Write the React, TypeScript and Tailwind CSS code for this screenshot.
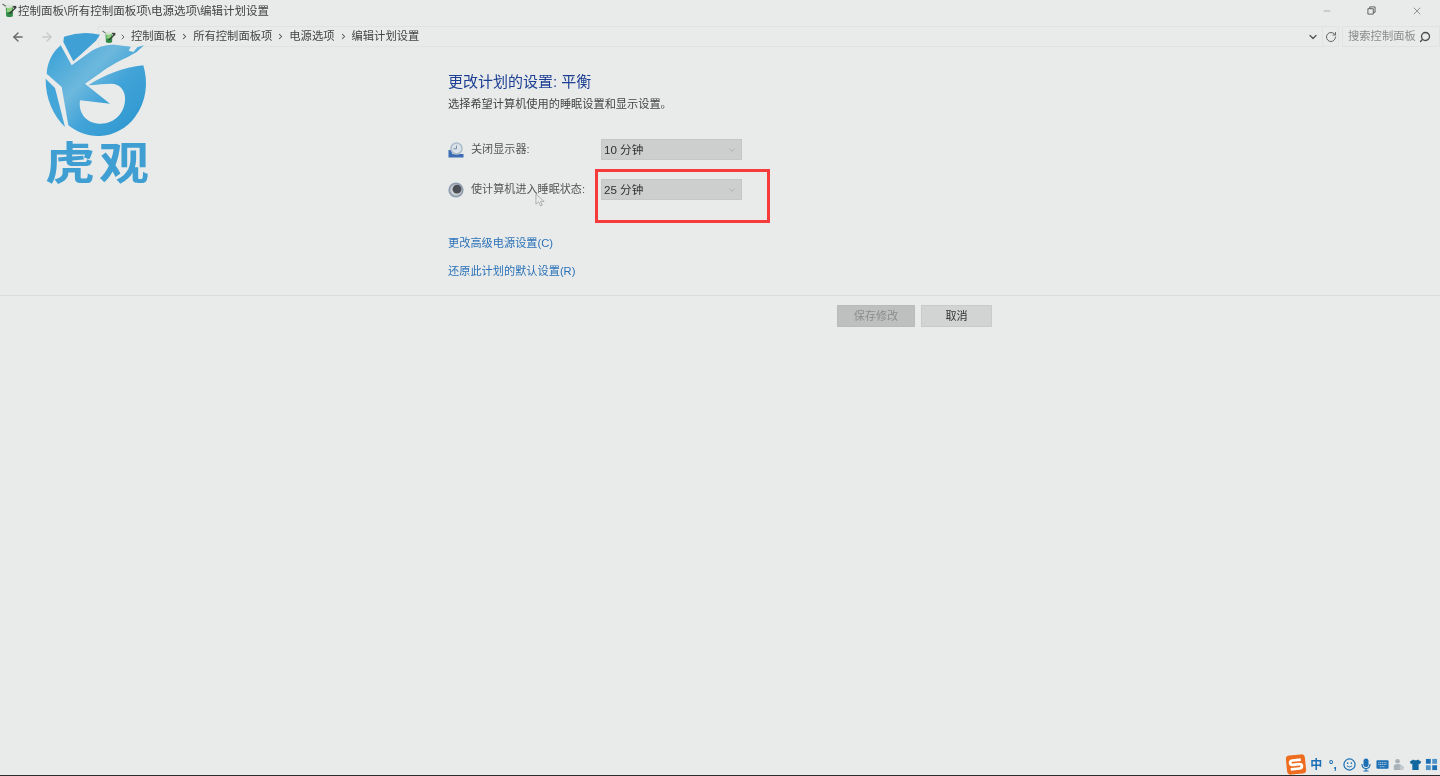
import React from 'react';
import { ArrowLeft, ArrowRight, ChevronDown, ChevronRight, RotateCw, Search, X, Minus } from 'lucide-react';

const FONT = "font-['Liberation_Sans','Noto_Sans_CJK_SC',sans-serif]";

const BatteryIcon: React.FC<{ className?: string }> = ({ className }) => (
  <svg viewBox="0 0 16 16" className={className}>
    <path d="M4 3 L12 2.5 L11.5 14 Q8 15.8 4.5 14 Z" fill="#2e8a45" />
    <path d="M5 5 L11 4.5 L10.8 9 L5 10 Z" fill="#8ed07c" />
    <path d="M3.8 3 Q8 0.6 12.2 2.6 L11.8 4.6 Q8 6 4.2 5 Z" fill="#d9e4d6" />
    <path d="M0.5 1 L4 3.5" stroke="#6d7268" strokeWidth="1.2" />
    <path d="M9 11.5 L15.5 5 L15 3 L11 3.5 L13 5.5 L7 11 Z" fill="#3a3d3c" />
  </svg>
);

const MonitorClockIcon: React.FC = () => (
  <svg viewBox="0 0 16 16" className="w-4 h-4 shrink-0">
    <path d="M0.5 8 L4 8 L4 12 L15.5 12 L15.5 15.5 L0.5 15.5 Z" fill="#3b6cb4" />
    <circle cx="8.5" cy="6.5" r="6.3" fill="#aebcc9" />
    <circle cx="8.5" cy="6.5" r="4.7" fill="#dbe3ea" />
    <path d="M8.5 3.5 V6.8 H5.5" fill="none" stroke="#7b8ea3" strokeWidth="1" />
  </svg>
);

const MoonIcon: React.FC = () => (
  <svg viewBox="0 0 16 16" className="w-4 h-4 shrink-0">
    <circle cx="8" cy="8" r="7.6" fill="#8e9cae" />
    <circle cx="8" cy="8" r="5.8" fill="#c9ced3" />
    <circle cx="9" cy="7.2" r="4.4" fill="#4b4f55" />
  </svg>
);

const LogoMark: React.FC = () => (
  <svg viewBox="0 0 345 315" className="w-[115px] h-[105px] block">
    <defs>
      <linearGradient id="logoFill" x1="0.1" y1="0.1" x2="0.95" y2="0.85">
        <stop offset="0" stopColor="#44a6d8" />
        <stop offset="0.35" stopColor="#6db8dd" />
        <stop offset="0.6" stopColor="#42a4d8" />
        <stop offset="1" stopColor="#2f98d0" />
      </linearGradient>
    </defs>
    <path d="M72 14 Q125 -4 180 8 L168 26 L100 88 L70 30 Z" fill="#3fa0d6" />
    <path
      d="M62 40 L95 100 L150 60 C175 42 200 38 225 38 L272 44 L266 56 L280 60 L292 46 L312 40 L290 60 L262 76 C235 88 205 105 185 120 L135 155 L210 215 L120 205 C115 240 135 272 175 275 C225 278 258 240 255 195 C253 170 235 155 215 155 C195 155 170 158 145 160 C190 130 250 105 310 100 C325 150 320 210 285 255 C260 290 220 310 180 312 C145 314 110 300 85 280 L65 165 L20 125 C22 90 38 60 62 40 Z"
      fill="url(#logoFill)"
    />
    <path d="M17 140 L45 168 L75 285 C40 250 16 200 17 140 Z" fill="#44a6d8" />
  </svg>
);

const TraySlot: React.FC<{ children: React.ReactNode }> = ({ children }) => (
  <div className="w-[16.5px] flex justify-center items-center shrink-0">{children}</div>
);

const TrayIcons: React.FC = () => (
  <div className="flex items-center h-[21px]">
    <svg viewBox="0 0 22 22" className="w-[22px] h-[21px] -rotate-6 mr-[1px]">
      <rect x="1" y="1" width="20" height="20" rx="4" fill="#ee6c1f" />
      <path d="M16.5 6.5 H8 Q5 6.5 5 9 Q5 11 8 11 H14 Q17 11 17 13 Q17 15.5 14 15.5 H5" fill="none" stroke="#fff" strokeWidth="2.8" />
    </svg>
    <TraySlot><span className="text-[12px] leading-none font-bold text-[#1b6fb5]">中</span></TraySlot>
    <TraySlot><span className="text-[12px] leading-none font-bold text-[#1b6fb5]">°,</span></TraySlot>
    <TraySlot>
      <svg viewBox="0 0 14 14" className="w-[13px] h-[13px]">
        <circle cx="7" cy="7" r="6" fill="none" stroke="#1b6fb5" strokeWidth="1.3" />
        <circle cx="5" cy="5.5" r="0.9" fill="#1b6fb5" />
        <circle cx="9" cy="5.5" r="0.9" fill="#1b6fb5" />
        <path d="M4.2 8.5 Q7 11 9.8 8.5" fill="none" stroke="#1b6fb5" />
      </svg>
    </TraySlot>
    <TraySlot>
      <svg viewBox="0 0 14 14" className="w-[14px] h-[14px]">
        <rect x="4.5" y="0.5" width="5" height="8.5" rx="2.5" fill="#1b6fb5" />
        <path d="M3 6 Q3 10.5 7 10.5 Q11 10.5 11 6 M7 10.5 V13 M4.5 13 H9.5" fill="none" stroke="#1b6fb5" strokeWidth="1.2" />
      </svg>
    </TraySlot>
    <TraySlot>
      <svg viewBox="0 0 14 14" className="w-[13px] h-[13px]">
        <rect x="0.5" y="2.5" width="13" height="9" rx="1" fill="#1b6fb5" />
        <path d="M2.5 5 H11.5 M2.5 7 H11.5 M4 9.4 H10" stroke="#dfe8ef" strokeWidth="0.9" strokeDasharray="1.2 0.7" />
      </svg>
    </TraySlot>
    <TraySlot>
      <svg viewBox="0 0 14 14" className="w-[13px] h-[13px]">
        <circle cx="6" cy="3.5" r="2.5" fill="#a9b2b8" />
        <path d="M2 13 V9 Q2 6.5 6 6.5 Q10 6.5 10 9 V13 Z" fill="#a9b2b8" />
        <circle cx="10.5" cy="10.5" r="2.5" fill="#c3cacd" />
      </svg>
    </TraySlot>
    <TraySlot>
      <svg viewBox="0 0 14 14" className="w-[13px] h-[13px]">
        <path d="M4.5 1.5 L0.8 4 L2.3 6.8 L3.6 6 V12.8 H10.4 V6 L11.7 6.8 L13.2 4 L9.5 1.5 Q7 3.5 4.5 1.5 Z" fill="#11689f" />
      </svg>
    </TraySlot>
    <TraySlot>
      <svg viewBox="0 0 14 14" className="w-[13px] h-[13px]">
        <rect x="1" y="1" width="5.2" height="5.2" fill="#1b6fb5" />
        <rect x="7.8" y="1" width="5.2" height="5.2" fill="#4f93c9" />
        <rect x="1" y="7.8" width="5.2" height="5.2" fill="#4f93c9" />
        <rect x="7.8" y="7.8" width="5.2" height="5.2" fill="#1b6fb5" />
      </svg>
    </TraySlot>
  </div>
);

const Dropdown: React.FC<{ value: string }> = ({ value }) => (
  <div className="w-[141px] h-[21px] bg-[#cdcfce] border border-[#c6c8c7] flex items-center justify-between pl-[2px] pr-[4px] text-[11.6px] text-[#303030]">
    <span>{value}</span>
    <ChevronDown className="w-[10px] h-[10px] text-[#8f9291]" strokeWidth={1.2} />
  </div>
);

const Crumb: React.FC<{ label: string }> = ({ label }) => (
  <>
    <span>{label}</span>
    <ChevronRight className="w-[9px] h-[9px] mx-[4px] text-[#505050]" strokeWidth={2.8} />
  </>
);

const App: React.FC = () => {
  return (
    <div className={`${FONT} relative w-[1440px] h-[776px] overflow-hidden bg-[#e9ebea] flex flex-col text-[#3c3c3c] blur-[0.3px]`}>
      {/* title bar */}
      <div className="h-[26px] flex items-start pt-[3px] pl-[2px] shrink-0">
        <BatteryIcon className="w-[15px] h-[15px] mr-[1px]" />
        <span className="text-[11.5px] leading-[16px] text-[#444]">控制面板\所有控制面板项\电源选项\编辑计划设置</span>
        <div className="ml-auto flex items-center h-[15px] text-[#555]">
          <Minus className="w-[10px] h-[10px] mr-[35px]" strokeWidth={1} />
          <svg viewBox="0 0 10 10" className="w-[9px] h-[9px] mr-[35px]">
            <path d="M1 3 H7 V9 H1 Z M3 3 V1 H9 V7 H7" fill="none" stroke="#555" />
          </svg>
          <X className="w-[12px] h-[12px] mr-[17px]" strokeWidth={1.2} />
        </div>
      </div>

      {/* address bar */}
      <div className="h-[22px] flex items-start shrink-0 text-[#444]">
        <div className="w-[98px] h-[21px] flex items-center pl-[11px] gap-[15px]">
          <ArrowLeft className="w-[14px] h-[14px] text-[#6a6a6a]" strokeWidth={2.4} />
          <ArrowRight className="w-[14px] h-[14px] text-[#c8caca]" strokeWidth={2.4} />
          <ChevronDown className="w-[8px] h-[8px] text-[#555] -ml-[3px]" strokeWidth={2} />
        </div>
        <div className="w-[1224px] h-[21px] border-y border-l border-[#e1e3e2] flex items-center">
          <BatteryIcon className="relative z-10 w-[14px] h-[14px] ml-[3px] mr-[3px]" />
          <ChevronRight className="w-[8px] h-[8px] mr-[4px] text-[#505050]" strokeWidth={2.6} />
          <div className="relative z-10 flex items-center text-[11.3px]">
            <Crumb label="控制面板" />
            <Crumb label="所有控制面板项" />
            <Crumb label="电源选项" />
            <span>编辑计划设置</span>
          </div>
          <ChevronDown className="w-[12px] h-[12px] ml-auto mr-[3px] text-[#555]" strokeWidth={2.6} />
        </div>
        <div className="w-[17px] h-[21px] border border-[#e1e3e2] flex items-center justify-center">
          <RotateCw className="w-[12px] h-[12px] text-[#666]" strokeWidth={2} />
        </div>
        <div className="ml-[3px] flex-1 h-[21px] border border-[#e1e3e2] flex items-center pl-[5px] text-[11.3px] text-[#8a8c8c]">
          <span>搜索控制面板</span>
          <Search className="w-[12px] h-[12px] ml-[3px] text-[#4a4a4a] -scale-x-100" strokeWidth={2.6} />
        </div>
      </div>

      {/* settings */}
      <div className="pl-[448px] pt-[23px] h-[248px] shrink-0 border-b border-[#dcdedd]">
        <h1 className="text-[15px] leading-[22px] font-normal text-[#1c3f94]">更改计划的设置: 平衡</h1>
        <p className="text-[11.2px] leading-[16px] mt-[3px] text-[#444]">选择希望计算机使用的睡眠设置和显示设置。</p>

        <div className="flex items-center h-[21px] mt-[27px]">
          <MonitorClockIcon />
          <span className="w-[130px] ml-[7px] text-[11.1px] text-[#555]">关闭显示器:</span>
          <Dropdown value="10 分钟" />
        </div>
        <div className="flex items-center h-[21px] mt-[19px]">
          <MoonIcon />
          <span className="w-[130px] ml-[7px] text-[11.1px] text-[#555]">使计算机进入睡眠状态:</span>
          <Dropdown value="25 分钟" />
        </div>

        <div className="mt-[35px] text-[11.2px] leading-[16px] text-[#2a72b8]">更改高级电源设置(C)</div>
        <div className="mt-[12px] text-[11.2px] leading-[16px] text-[#2a72b8]">还原此计划的默认设置(R)</div>
      </div>

      {/* buttons */}
      <div className="flex pl-[837px] pt-[9px] gap-[6px] shrink-0">
        <div className="w-[78px] h-[22px] bg-[#bec0bf] border border-[#b9bbba] flex items-center justify-center text-[11.1px] text-[#8b8d8c]">保存修改</div>
        <div className="w-[71px] h-[22px] bg-[#d2d4d3] border border-[#c9cbca] flex items-center justify-center text-[11.1px] text-[#333]">取消</div>
      </div>

      {/* tray */}
      <div className="mt-auto h-[21px] flex justify-end shrink-0">
        <TrayIcons />
      </div>
      <div className="h-[1px] bg-[#2b2d2e] shrink-0" />

      {/* watermark logo */}
      <div className="absolute left-[40px] top-[32px] w-[115px] flex flex-col">
        <LogoMark />
        <span className="ml-[5px] mt-[3px] text-[50px] leading-[50px] font-bold text-[#3f9fd2] tracking-[4px] whitespace-nowrap scale-y-90">虎观</span>
      </div>

      {/* red highlight around the sleep dropdown */}
      <div className="absolute left-[595px] top-[169px] w-[175px] h-[54px] border-[3px] border-[#f73a3a]" />

      {/* mouse pointer */}
      <svg viewBox="0 0 12 16" className="absolute left-[535px] top-[193px] w-[11px] h-[15px]">
        <path d="M1 1 V12 L4 9.5 L6 14 L8 13 L6 9 H10 Z" fill="#e9ebea" stroke="#9a9c9b" strokeWidth="0.8" />
      </svg>
    </div>
  );
};

export default App;
